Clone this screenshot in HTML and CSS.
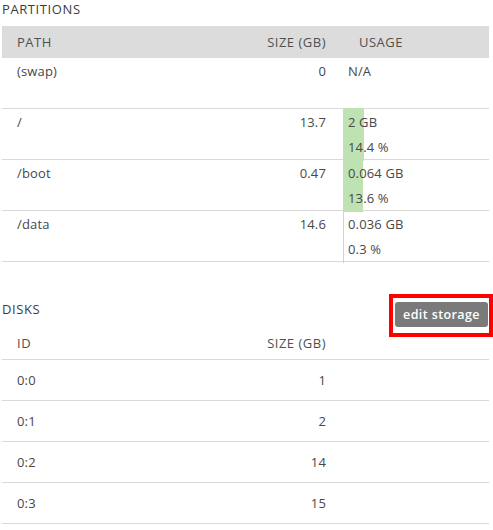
FILE: index.html
```html
<!DOCTYPE html>
<html>
<head>
<meta charset="utf-8">
<link rel="stylesheet" href="styles.css">
</head>
<body>
<div class="page">
  <div class="title">PARTITIONS</div>
  <div class="ptable">
    <div class="row head">
      <div class="c-path">PATH</div>
      <div class="c-size">SIZE (GB)</div>
      <div class="c-usage">USAGE</div>
    </div>
    <div class="row prow">
      <div class="c-path">(swap)</div>
      <div class="c-size">0</div>
      <div class="c-usage"><div class="line">N/A</div></div>
    </div>
    <div class="row prow">
      <div class="c-path">/</div>
      <div class="c-size">13.7</div>
      <div class="c-usage"><div class="bar" style="width:14.4%"></div><div class="line">2 GB</div><div class="line">14.4 %</div></div>
    </div>
    <div class="row prow">
      <div class="c-path">/boot</div>
      <div class="c-size">0.47</div>
      <div class="c-usage"><div class="bar" style="width:13.6%"></div><div class="line">0.064 GB</div><div class="line">13.6 %</div></div>
    </div>
    <div class="row prow">
      <div class="c-path">/data</div>
      <div class="c-size">14.6</div>
      <div class="c-usage"><div class="bar" style="width:0.3%"></div><div class="line">0.036 GB</div><div class="line">0.3 %</div></div>
    </div>
  </div>

  <div class="disks-head">
    <div class="title">DISKS</div>
    <div class="btn-wrap">
      <button class="btn">edit storage</button>
      <div class="highlight"></div>
    </div>
  </div>
  <div class="dtable">
    <div class="row dhead">
      <div class="c-path">ID</div>
      <div class="c-size">SIZE (GB)</div>
      <div class="c-usage"></div>
    </div>
    <div class="row drow"><div class="c-path">0:0</div><div class="c-size">1</div><div class="c-usage"></div></div>
    <div class="row drow"><div class="c-path">0:1</div><div class="c-size">2</div><div class="c-usage"></div></div>
    <div class="row drow"><div class="c-path">0:2</div><div class="c-size">14</div><div class="c-usage"></div></div>
    <div class="row drow"><div class="c-path">0:3</div><div class="c-size">15</div><div class="c-usage"></div></div>
  </div>
</div>
</body>
</html>
```
FILE: styles.css
```css
* { box-sizing: border-box; }
html, body { margin: 0; padding: 0; background: #fff; }
body {
  font-family: "Open Sans", "Liberation Sans", sans-serif;
  font-size: 13px;
  color: #484848;
}
.page { padding: 0 4px 0 2px; width: 493px; height: 530px; overflow: hidden; }
.title {
  line-height: 18px;
  height: 18px;
  letter-spacing: 0.6px;
  color: #3c3c3c;
}
.ptable { margin-top: 8px; }
.row {
  display: grid;
  grid-template-columns: 1fr 160px 146px;
}
.c-path { padding-left: 15px; }
.c-size { text-align: right; padding-right: 17px; }
.head {
  height: 32px;
  background: #dcdcdc;
  align-items: center;
  letter-spacing: 0.5px;
  color: #505050;
}
.head .c-usage { padding-left: 16px; }
.prow {
  height: 51px;
  border-bottom: 1px solid #d9d9d9;
  line-height: 25px;
  letter-spacing: 0.15px;
}
.prow > div { padding-top: 1px; }
.prow .c-usage {
  position: relative;
  padding-left: 5px;
  padding-top: 1px;
}
.bar {
  position: absolute;
  left: 0;
  top: -1px;
  bottom: -1px;
  min-width: 1px;
  background: #bfe2b3;
}
.line { position: relative; height: 25px; }

.disks-head {
  margin-top: 38px;
  height: 27px;
  display: flex;
  justify-content: space-between;
  align-items: flex-start;
}
.btn-wrap { position: relative; margin-top: 2px; margin-right: 1px; }
.btn {
  display: block;
  height: 25px;
  width: 93px;
  padding: 0;
  border: none;
  border-radius: 3px;
  background: #7a7a7a;
  color: #fff;
  font-family: "Open Sans", "Liberation Sans", sans-serif;
  font-size: 12.5px;
  font-weight: 600;
  letter-spacing: 0.4px;
  line-height: 25px;
}
.highlight {
  position: absolute;
  left: -6px;
  top: -8px;
  right: -5px;
  bottom: -10px;
  border: 4px solid #ff0000;
}
.dhead {
  height: 33px;
  border-bottom: 1px solid #d9d9d9;
  align-items: center;
  letter-spacing: 0.5px;
  color: #505050;
}
.drow {
  height: 41px;
  border-bottom: 1px solid #d9d9d9;
  align-items: center;
  letter-spacing: 0.15px;
}
```
